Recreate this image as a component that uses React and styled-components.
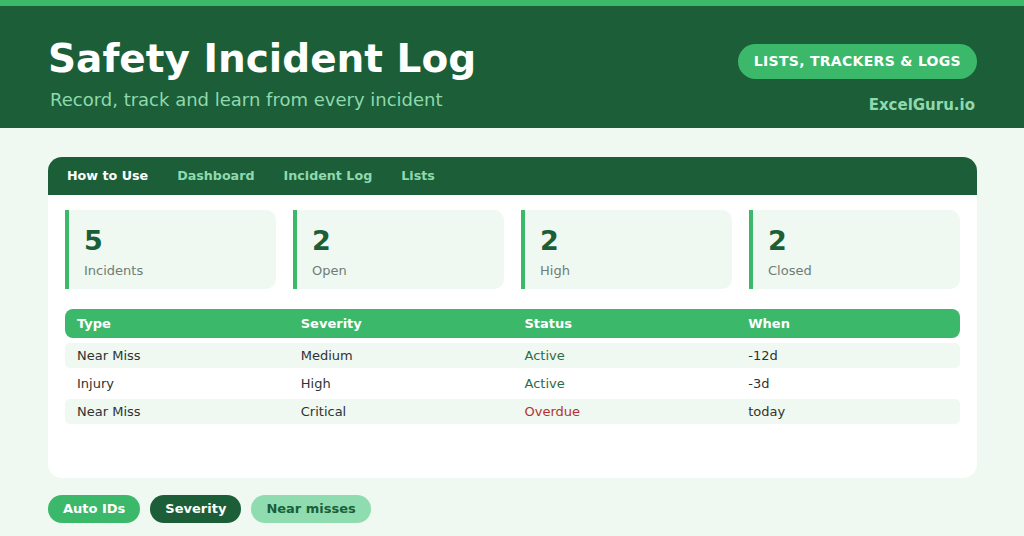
import React from 'react'
import styled, { createGlobalStyle } from 'styled-components'

const colors = {
  accent: '#3bb86a',
  dark: '#1b5e38',
  pale: '#eff8f1',
  mint: '#8fd9ad',
  text: '#2f3331',
  muted: '#6f7d74',
  active: '#2e6b48',
  overdue: '#b3322f',
}

const GlobalStyle = createGlobalStyle`
  body {
    margin: 0;
    background: ${colors.pale};
    font-family: 'DejaVu Sans', 'Noto Sans', sans-serif;
  }
`

const Page = styled.main`
  min-height: 536px;
  border-top: 6px solid ${colors.accent};
  box-sizing: border-box;
`

const Header = styled.header`
  background: ${colors.dark};
  height: 122px;
  padding: 0 47px 0 48px;
  display: flex;
  justify-content: space-between;
  align-items: flex-start;
  box-sizing: border-box;
`

const TitleBlock = styled.div`
  padding-top: 27px;
`

const Title = styled.h1`
  margin: 0;
  color: white;
  font-size: 39px;
  font-weight: bold;
  line-height: 52px;
`

const Subtitle = styled.p`
  margin: 4px 0 0 2px;
  color: ${colors.mint};
  font-size: 18px;
  line-height: 22px;
`

const Brand = styled.div`
  padding-top: 38px;
  display: flex;
  flex-direction: column;
  align-items: flex-end;
`

const Badge = styled.div`
  background: ${colors.accent};
  color: white;
  font-size: 14px;
  font-weight: bold;
  letter-spacing: 0.3px;
  height: 35px;
  line-height: 35px;
  padding: 0 16px;
  border-radius: 18px;
`

const Site = styled.div`
  margin: 17px 2px 0 0;
  color: ${colors.mint};
  font-size: 15px;
  font-weight: bold;
`

const Card = styled.section`
  margin: 29px 47px 0 48px;
  background: white;
  border-radius: 14px;
  overflow: hidden;
  height: 321px;
`

const Tabs = styled.nav`
  background: ${colors.dark};
  height: 38px;
  display: flex;
  align-items: center;
  gap: 29px;
  padding: 0 19px 2px;
  box-sizing: border-box;
`

const Tab = styled.span`
  font-size: 12.7px;
  font-weight: bold;
  color: ${(p) => (p.$active ? 'white' : colors.mint)};
`

const Content = styled.div`
  padding: 15px 17px;
`

const Stats = styled.div`
  display: grid;
  grid-template-columns: repeat(4, 1fr);
  gap: 17px;
`

const Stat = styled.div`
  background: ${colors.pale};
  border-left: 4px solid ${colors.accent};
  border-radius: 0 10px 10px 0;
  height: 79px;
  padding: 14px 0 0 15px;
  box-sizing: border-box;
`

const StatValue = styled.div`
  color: ${colors.dark};
  font-size: 27px;
  font-weight: bold;
  line-height: 34px;
`

const StatLabel = styled.div`
  color: ${colors.muted};
  font-size: 13px;
  margin-top: 5px;
`

const Table = styled.div`
  margin-top: 20px;
  display: flex;
  flex-direction: column;
  gap: 3px;
`

const Row = styled.div`
  display: grid;
  grid-template-columns: repeat(4, 1fr);
  align-items: center;
  height: ${(p) => (p.$head ? '29px' : '25px')};
  margin-bottom: ${(p) => (p.$head ? '2px' : '0')};
  background: ${(p) => (p.$head ? colors.accent : p.$shade ? colors.pale : 'white')};
  border-radius: ${(p) => (p.$head ? '8px' : '5px')};
  font-size: 13px;
  font-weight: ${(p) => (p.$head ? 'bold' : 'normal')};
  color: ${(p) => (p.$head ? 'white' : colors.text)};
`

const Cell = styled.span`
  padding-left: 12px;
  color: ${(p) => (p.$status === 'Overdue' ? colors.overdue : p.$status ? colors.active : 'inherit')};
`

const Features = styled.div`
  margin: 17px 48px 0;
  display: flex;
  gap: 10px;
`

const Pill = styled.span`
  height: 28px;
  line-height: 28px;
  padding: 0 15px;
  border-radius: 14px;
  font-size: 13px;
  font-weight: bold;
  background: ${(p) => p.$bg};
  color: ${(p) => p.$fg};
`

const stats = [
  { value: 5, label: 'Incidents' },
  { value: 2, label: 'Open' },
  { value: 2, label: 'High' },
  { value: 2, label: 'Closed' },
]

const incidents = [
  { type: 'Near Miss', severity: 'Medium', status: 'Active', when: '-12d' },
  { type: 'Injury', severity: 'High', status: 'Active', when: '-3d' },
  { type: 'Near Miss', severity: 'Critical', status: 'Overdue', when: 'today' },
]

export default function App() {
  return (
    <Page>
      <GlobalStyle />
      <Header>
        <TitleBlock>
          <Title>Safety Incident Log</Title>
          <Subtitle>Record, track and learn from every incident</Subtitle>
        </TitleBlock>
        <Brand>
          <Badge>LISTS, TRACKERS &amp; LOGS</Badge>
          <Site>ExcelGuru.io</Site>
        </Brand>
      </Header>

      <Card>
        <Tabs>
          <Tab $active>How to Use</Tab>
          <Tab>Dashboard</Tab>
          <Tab>Incident Log</Tab>
          <Tab>Lists</Tab>
        </Tabs>
        <Content>
          <Stats>
            {stats.map((s) => (
              <Stat key={s.label}>
                <StatValue>{s.value}</StatValue>
                <StatLabel>{s.label}</StatLabel>
              </Stat>
            ))}
          </Stats>
          <Table>
            <Row $head>
              <Cell>Type</Cell>
              <Cell>Severity</Cell>
              <Cell>Status</Cell>
              <Cell>When</Cell>
            </Row>
            {incidents.map((r, i) => (
              <Row key={i} $shade={i % 2 === 0}>
                <Cell>{r.type}</Cell>
                <Cell>{r.severity}</Cell>
                <Cell $status={r.status}>{r.status}</Cell>
                <Cell>{r.when}</Cell>
              </Row>
            ))}
          </Table>
        </Content>
      </Card>

      <Features>
        <Pill $bg={colors.accent} $fg="white">Auto IDs</Pill>
        <Pill $bg={colors.dark} $fg="white">Severity</Pill>
        <Pill $bg="#8fdcb0" $fg={colors.dark}>Near misses</Pill>
      </Features>
    </Page>
  )
}
